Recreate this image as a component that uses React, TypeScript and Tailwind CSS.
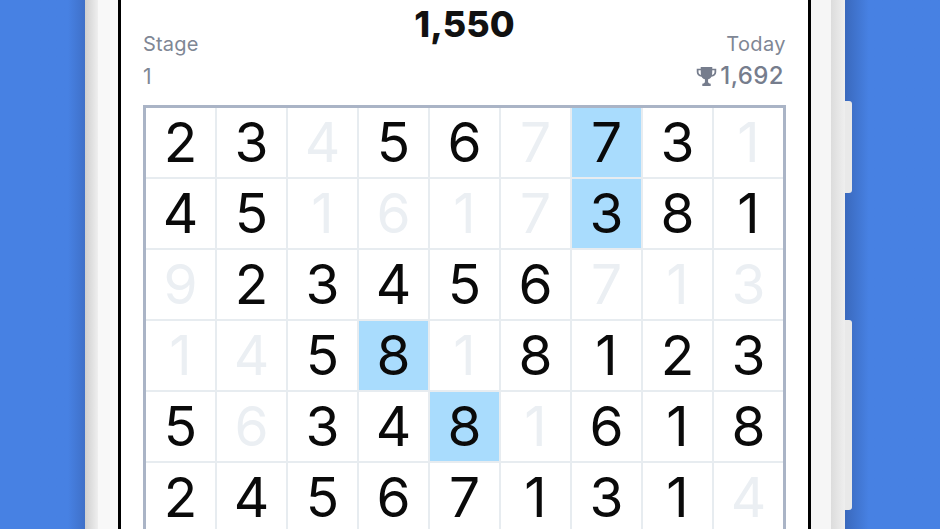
const rows: string[] = [
  "2 3 4' 5 6 7' 7 3 1'",
  "4 5 1' 6' 1' 7' 3 8 1",
  "9' 2 3 4 5 6 7' 1' 3'",
  "1' 4' 5 8 1' 8 1 2 3",
  "5 6' 3 4 8 1' 6 1 8",
  "2 4 5 6 7 1 3 1 4'",
];
const hi = new Set(["0-6", "1-6", "3-3", "4-4"]);

function Trophy() {
  return (
    <svg viewBox="0 0 20 20" className="h-[21px] w-[21px]" fill="#767d8d">
      <path d="M4.500 1h11v1.500h3.800v3.200c0 2.400-1.800 4.200-4.600 4.600-.8 1.300-1.900 2.100-3.200 2.400V15c0 1 .9 1.600 2.500 1.800V19H6v-2.200c1.600-.2 2.500-.8 2.500-1.800v-2.300c-1.300-.3-2.400-1.100-3.200-2.400C2.500 9.900.7 8.100.7 5.700V2.500h3.800V1zM2.400 4v1.700c0 1.300.8 2.400 2.300 2.800-.1-.9-.2-2.700-.2-4.500H2.400zm15.200 0h-2.100c0 1.800-.1 3.600-.2 4.500 1.500-.4 2.300-1.500 2.300-2.800V4z" />
    </svg>
  );
}

export default function App() {
  return (
    <div className="flex h-[529px] w-[940px] overflow-hidden bg-[#4781e3] [font-family:Inter,sans-serif]">
      <div className="h-full w-[85px] bg-gradient-to-r from-[#4781e3] from-[80%] to-[#3f70c8]" />
      <div className="flex h-full w-[760px] bg-[#f6f6f6]">
        <div className="h-full w-[13px] bg-gradient-to-r from-[#cfcfcf] to-[#efefef]" />
        <div className="h-full w-[20px] bg-[#f8f8f8]" />
        <div className="h-full w-[693px] border-x-[3px] border-black bg-white px-[22px]">
          <div className="grid h-[105px] grid-cols-3 text-[#7f8795]">
            <div className="pt-[32px]">
              <div className="text-[20px] leading-[24px] tracking-[0.2px]">Stage</div>
              <div className="mt-[9px] text-[21px] leading-[24px]">1</div>
            </div>
            <div className="pt-[6px] text-center text-[36px] leading-[36px] font-extrabold text-[#111]">1,550</div>
            <div className="flex flex-col items-end pt-[32px]">
              <div className="text-[20px] leading-[24px] tracking-[0.4px]">Today</div>
              <div className="mt-[8px] mr-[2px] flex items-center gap-[3px] text-[24px] leading-[24px] font-medium tracking-[0.4px] text-[#767d8d]">
                <Trophy />
                <span>1,692</span>
              </div>
            </div>
          </div>
          <div className="border-t-[3px] border-r-[3px] border-l-[3px] border-[#aab4c6]">
            {rows.map((row, r) => (
              <div key={r} className="flex h-[71px]">
                {row.split(" ").map((c, i) => {
                  const faint = c.endsWith("'");
                  const on = hi.has(`${r}-${i}`);
                  return (
                    <div
                      key={i}
                      className={`flex h-[71px] flex-1 items-center justify-center border-b-2 border-[#e7ecf0] text-[55px] leading-none font-normal ${i < 8 ? "border-r-2" : ""} ${faint ? "text-[#ebeff3]" : "text-[#0a0a0a]"} ${on ? "bg-[#a9dcfd]" : "bg-white"}`}
                    >
                      {c[0]}
                    </div>
                  );
                })}
              </div>
            ))}
          </div>
        </div>
        <div className="h-full w-[20px] bg-[#f6f6f6]" />
        <div className="h-full w-[14px] bg-gradient-to-r from-[#dcdcdc] to-[#efefef]" />
      </div>
      <div className="relative h-full flex-1 bg-gradient-to-r from-[#3a69bd] to-[#4781e3] to-[25%]">
        <div className="absolute top-[101px] left-0 h-[92px] w-[7px] rounded-tr-[3px] rounded-br-[3px] bg-[#e9e9e9]" />
        <div className="absolute top-[320px] left-0 h-[190px] w-[7px] rounded-tr-[3px] rounded-br-[3px] bg-[#e9e9e9]" />
      </div>
    </div>
  );
}
